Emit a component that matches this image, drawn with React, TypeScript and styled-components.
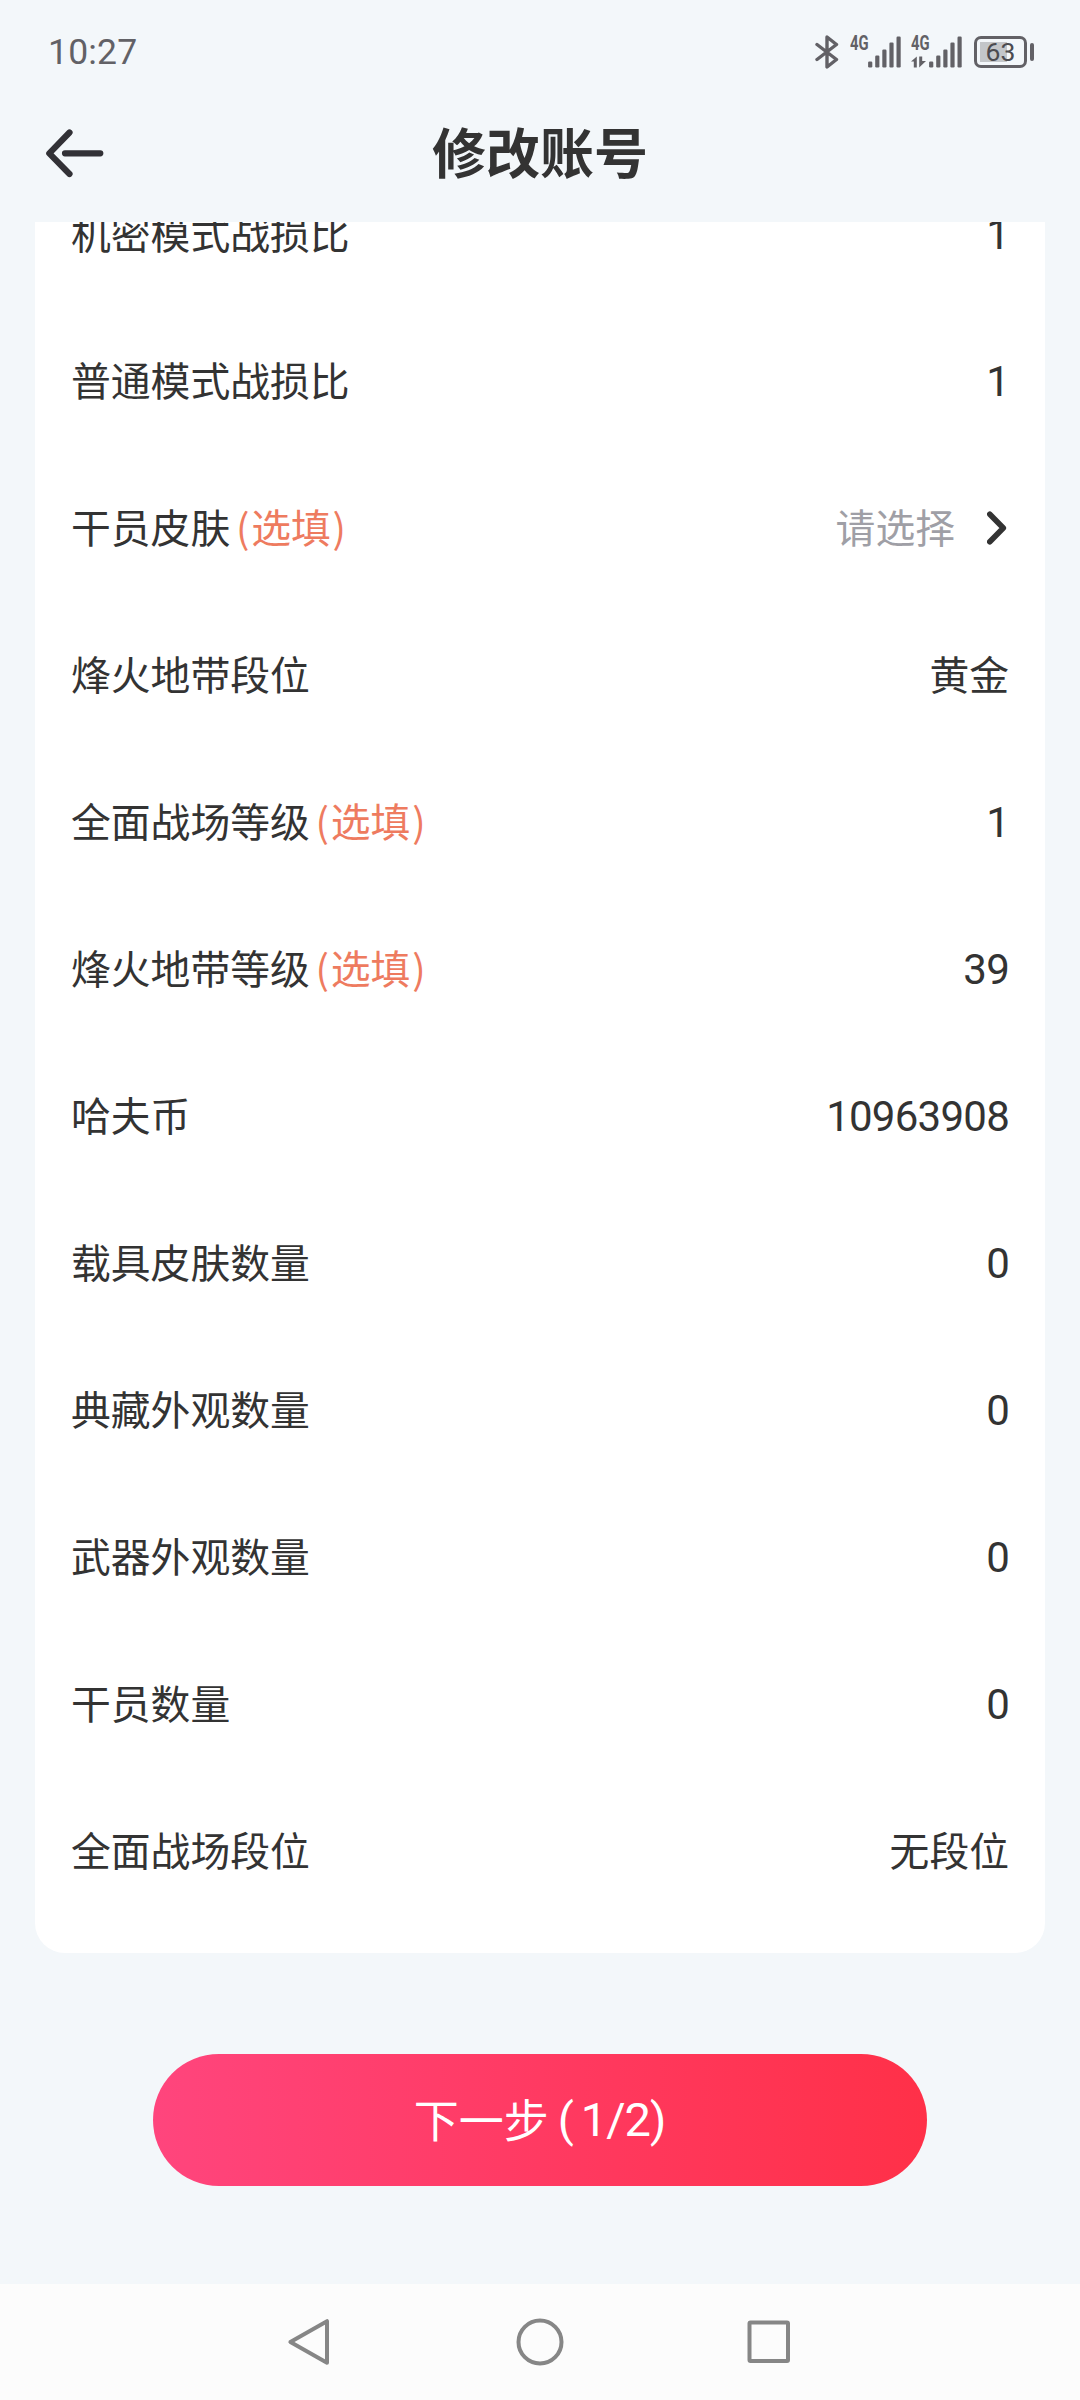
import React from "react";
import styled, { createGlobalStyle } from "styled-components";

const GlobalStyle = createGlobalStyle`
  * { box-sizing: border-box; }
  body { margin: 0; background: #f3f7fa; }
`;

const cjk = `"Noto Sans CJK SC", sans-serif`;
const latin = `Roboto, "Noto Sans CJK SC", sans-serif`;

const Screen = styled.div`
  width: 1080px;
  height: 2400px;
  display: flex;
  flex-direction: column;
  background: #f3f7fa;
  color: #333333;
  font-family: ${cjk};
  overflow: hidden;
`;

const StatusBar = styled.header`
  height: 104px;
  flex: none;
  display: flex;
  align-items: center;
  justify-content: space-between;
  padding: 0 46px 0 48px;
  color: #626166;
`;

const Clock = styled.span`
  font: 400 35.5px/40px ${latin};
  letter-spacing: 0.2px;
`;

const StatusIcons = styled.div`
  display: flex;
  align-items: center;
`;

const BluetoothIcon = styled.svg`
  width: 24px;
  height: 34px;
  margin-right: 11px;
`;

const Signal = styled.div<{ $gap: number }>`
  display: flex;
  height: 32px;
  margin-right: ${(p) => p.$gap}px;
`;

const Network = styled.div`
  width: 18px;
  display: flex;
  flex-direction: column;
  justify-content: space-between;
`;

const NetworkLabel = styled.span`
  font: 700 19.5px/16px ${latin};
  transform: scaleX(0.76);
  transform-origin: left center;
`;

const Battery = styled.div`
  display: flex;
  align-items: center;
  gap: 3px;
`;

const BatteryBody = styled.div`
  width: 53px;
  height: 32px;
  border: 3px solid #626166;
  border-radius: 7px;
  display: flex;
  align-items: center;
  justify-content: center;
  background: linear-gradient(#c3c6c9, #c3c6c9) 3px 3px / 27px 20px no-repeat;
  font: 400 26.5px/26px ${latin};
  color: #4b4b50;
`;

const BatteryTip = styled.div`
  width: 4px;
  height: 18px;
  border-radius: 2px;
  background: #626166;
`;

const TitleBar = styled.div`
  height: 118px;
  flex: none;
  display: grid;
  grid-template-columns: 150px 1fr 150px;
  align-items: center;
  padding-bottom: 20px;
`;

const BackButton = styled.button`
  border: 0;
  padding: 0 0 0 44px;
  background: none;
  display: flex;
`;

const Title = styled.h1`
  margin: 0;
  padding-bottom: 4px;
  text-align: center;
  font: 700 54px/80px ${cjk};
`;

const Card = styled.main`
  height: 1731px;
  flex: none;
  margin: 0 35px;
  padding: 0 36px 28px;
  display: flex;
  flex-direction: column;
  justify-content: flex-end;
  overflow: hidden;
  background: #ffffff;
  border-radius: 0 0 30px 30px;
`;

const Row = styled.div`
  height: 147px;
  flex: none;
  display: flex;
  align-items: center;
  justify-content: space-between;
`;

const Label = styled.span`
  padding-bottom: 6px;
  font: 400 39.8px/60px ${cjk};
`;

const Optional = styled.span`
  margin-left: 4px;
  color: #ee7b5f;
`;

const Paren = styled.span`
  display: inline-block;
  width: 17px;
  text-align: center;
`;

const Value = styled.span<{ $placeholder?: boolean }>`
  display: flex;
  align-items: center;
  gap: 32px;
  padding-bottom: 6px;
  font: 400 39.8px/60px ${cjk};
  color: ${(p) => (p.$placeholder ? "#9f9fa6" : "#333333")};
`;

const Chevron = styled.svg`
  width: 22px;
  height: 36px;
  margin-top: 4px;
`;

const NumberValue = styled.span`
  font: 400 42px/60px ${latin};
  letter-spacing: -0.75px;
`;

const Footer = styled.footer`
  flex: 1;
  display: flex;
  justify-content: center;
  align-items: flex-start;
  padding-top: 101px;
`;

const NextButton = styled.button`
  width: 774px;
  height: 132px;
  border: 0;
  border-radius: 66px;
  padding: 0;
  display: flex;
  align-items: center;
  justify-content: center;
  background: linear-gradient(90deg, #ff457d, #ff3a62 50%, #ff3048);
  color: #ffffff;
  font: 400 45px/66px ${cjk};
`;

const StepName = styled.span`
  padding-bottom: 3px;
`;

const Step = styled.span`
  display: flex;
  margin-left: 9px;
  font: 400 47px/66px ${latin};
`;

const StepPart = styled.span<{ $before?: number }>`
  margin-left: ${(p) => p.$before ?? 0}px;
`;

const NavBar = styled.nav`
  height: 116px;
  flex: none;
  display: flex;
  align-items: center;
  justify-content: center;
  gap: 181px;
  background: #fcfcfc;
`;

const NavIcon = styled.svg`
  width: 48px;
  height: 48px;
  fill: none;
  stroke: #868686;
  stroke-width: 4;
  stroke-linejoin: round;
`;

const rows: { label: string; value?: string; text?: string; optional?: boolean; pick?: boolean }[] = [
  { label: "机密模式战损比", value: "1" },
  { label: "普通模式战损比", value: "1" },
  { label: "干员皮肤", text: "请选择", optional: true, pick: true },
  { label: "烽火地带段位", text: "黄金" },
  { label: "全面战场等级", value: "1", optional: true },
  { label: "烽火地带等级", value: "39", optional: true },
  { label: "哈夫币", value: "10963908" },
  { label: "载具皮肤数量", value: "0" },
  { label: "典藏外观数量", value: "0" },
  { label: "武器外观数量", value: "0" },
  { label: "干员数量", value: "0" },
  { label: "全面战场段位", text: "无段位" },
];

function Bars() {
  return (
    <svg width="33" height="32" fill="currentColor">
      {[6, 12, 18, 25, 31].map((h, i) => (
        <rect key={h} x={0.1 + i * 7.1} y={31.5 - h} width="4.2" height={h} rx="1.2" />
      ))}
    </svg>
  );
}

export default function App() {
  return (
    <Screen>
      <GlobalStyle />
      <StatusBar>
        <Clock>10:27</Clock>
        <StatusIcons>
          <BluetoothIcon viewBox="0 0 24 34" fill="none" stroke="currentColor" strokeWidth="3.4" strokeLinejoin="round" strokeLinecap="round">
            <path d="M2 9.5 L21.5 24.5 L12 32 V2 L21.5 9.5 L2 24.5" />
          </BluetoothIcon>
          <Signal $gap={10}>
            <Network>
              <NetworkLabel>4G</NetworkLabel>
            </Network>
            <Bars />
          </Signal>
          <Signal $gap={12}>
            <Network>
              <NetworkLabel>4G</NetworkLabel>
              <svg width="17" height="12" fill="currentColor">
                <path d="M0 5.5 L5.8 0.5 V11.5 H2.8 V5.5Z" />
                <path d="M8.2 0.5 H11.2 V5 H15 L8.2 11.5Z" />
              </svg>
            </Network>
            <Bars />
          </Signal>
          <Battery>
            <BatteryBody>63</BatteryBody>
            <BatteryTip />
          </Battery>
        </StatusIcons>
      </StatusBar>

      <TitleBar>
        <BackButton aria-label="返回">
          <svg width="62" height="52" fill="none" stroke="#323136" strokeWidth="6.2" strokeLinecap="round" strokeLinejoin="round">
            <path d="M25.5 5.5 L5.3 26.3 L25.5 47 M21 26.3 H56.3" />
          </svg>
        </BackButton>
        <Title>修改账号</Title>
      </TitleBar>

      <Card>
        {rows.map((row) => (
          <Row key={row.label}>
            <Label>
              {row.label}
              {row.optional && (
                <Optional>
                  <Paren>(</Paren>选填<Paren>)</Paren>
                </Optional>
              )}
            </Label>
            {row.value ? (
              <NumberValue>{row.value}</NumberValue>
            ) : (
              <Value $placeholder={row.pick}>
                {row.text}
                {row.pick && (
                  <Chevron fill="none" stroke="#333333" strokeWidth="5.6" strokeLinecap="round" strokeLinejoin="round">
                    <path d="M2.8 4.2 L16.3 18 L2.8 31.8" />
                  </Chevron>
                )}
              </Value>
            )}
          </Row>
        ))}
      </Card>

      <Footer>
        <NextButton>
          <StepName>下一步</StepName>
          <Step>
            <StepPart>(</StepPart>
            <StepPart $before={7}>1</StepPart>
            <StepPart $before={-1}>/</StepPart>
            <StepPart $before={-1}>2</StepPart>
            <StepPart $before={-1}>)</StepPart>
          </Step>
        </NextButton>
      </Footer>

      <NavBar>
        <NavIcon viewBox="0 0 48 48">
          <path d="M40 3.2 V44.8 L3.4 24 Z" />
        </NavIcon>
        <NavIcon viewBox="0 0 48 48">
          <circle cx="24" cy="24" r="21.5" />
        </NavIcon>
        <NavIcon viewBox="0 0 48 48">
          <rect x="4.5" y="4.5" width="38.5" height="38.5" rx="1" />
        </NavIcon>
      </NavBar>
    </Screen>
  );
}
